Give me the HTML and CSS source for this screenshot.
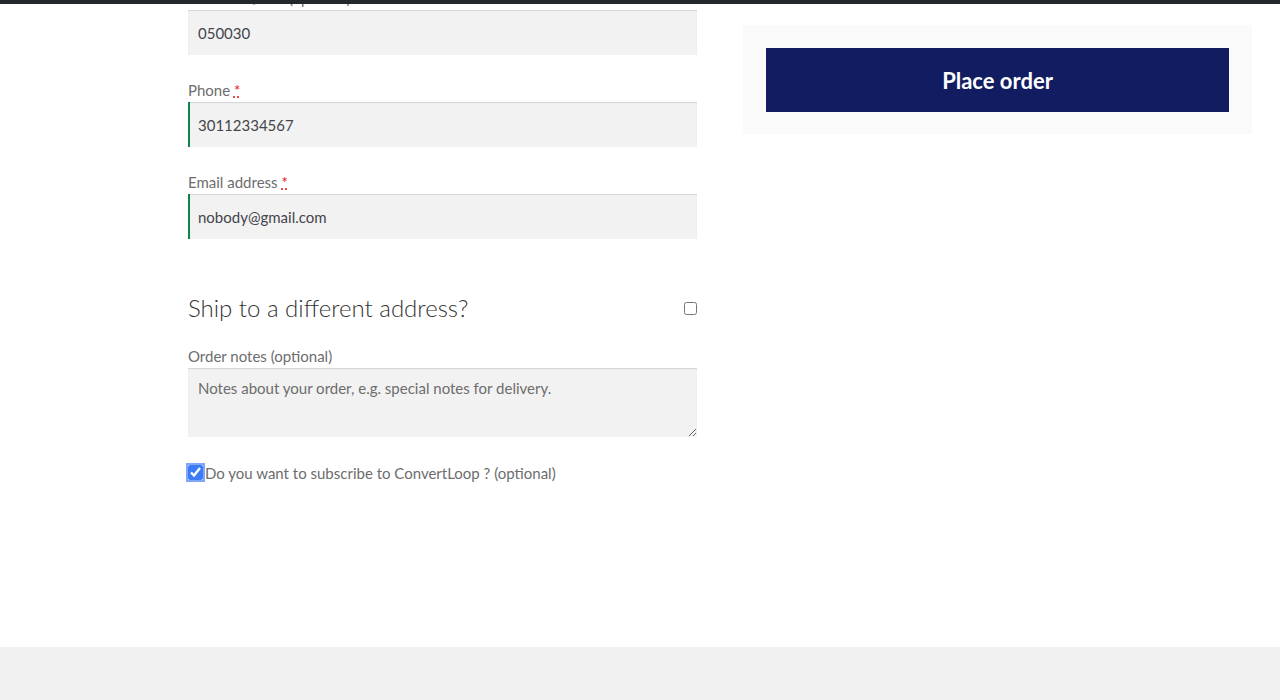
FILE: index.html
```html
<!DOCTYPE html>
<html lang="en">
<head>
<meta charset="utf-8">
<title>Checkout</title>
<link rel="stylesheet" href="styles.css">
</head>
<body>
<div class="topbar"></div>
<main class="page">
  <div class="checkout">
    <div class="col-billing">
      <p class="form-row">
        <label class="lbl">Postcode / ZIP (optional)</label>
        <input class="field" type="text" value="050030">
      </p>
      <p class="form-row">
        <label class="lbl">Phone <abbr class="req" title="required">*</abbr></label>
        <input class="field valid" type="text" value="30112334567">
      </p>
      <p class="form-row">
        <label class="lbl">Email address <abbr class="req" title="required">*</abbr></label>
        <input class="field valid" type="text" value="nobody@gmail.com">
      </p>
      <h3 class="ship">
        <span>Ship to a different address?</span>
        <input class="ship-check" type="checkbox">
      </h3>
      <p class="form-row notes-row">
        <label class="lbl">Order notes (optional)</label>
        <textarea class="field notes" placeholder="Notes about your order, e.g. special notes for delivery."></textarea>
      </p>
      <p class="subscribe">
        <input class="sub-check" type="checkbox" checked>
        <label class="sub-lbl">Do you want to subscribe to ConvertLoop ? (optional)</label>
      </p>
    </div>
    <div class="col-review">
      <div class="payment">
        <button class="place" type="button">Place order</button>
      </div>
    </div>
  </div>
</main>
<footer class="footer"></footer>
</body>
</html>
```
FILE: styles.css
```css
* { box-sizing: border-box; }
html, body { margin: 0; padding: 0; }
body {
  font-family: "Lato", "Open Sans", sans-serif;
  color: #6d6d6d;
  background: #fff;
  font-size: 15px;
  overflow: hidden;
}
.topbar {
  position: fixed;
  top: 0; left: 0; right: 0;
  height: 4px;
  background: #23282d;
  z-index: 10;
}
.page {
  height: 647px;
}
.checkout {
  display: grid;
  grid-template-columns: 509px 509px;
  column-gap: 46px;
  margin-left: 188px;
  width: 1064px;
}
.col-billing {
  margin-top: -14px;
}
.form-row {
  margin: 0 0 23px;
}
.lbl {
  display: block;
  height: 24px;
  line-height: 24px;
  color: #6d6d6d;
}
.req {
  color: #e8100f;
  text-decoration: underline dotted;
  border: 0;
}
.field {
  display: block;
  width: 100%;
  height: 45px;
  border: 0;
  padding: 0 10px;
  margin: 0;
  background: #f2f2f2;
  box-shadow: inset 0 1px 1px rgba(0,0,0,.125);
  font-family: inherit;
  font-size: 15px;
  color: #43454b;
  outline: none;
}
.field.valid {
  border-left: 2px solid #0f834d;
  padding-left: 8px;
}
.ship {
  display: flex;
  justify-content: space-between;
  align-items: center;
  margin: 47px 0 16px;
  height: 42px;
  font-size: 24px;
  font-weight: 300;
  color: #333;
}
.ship-check {
  width: 13px;
  height: 13px;
  margin: 2px 0 0;
}
.notes-row { margin-bottom: 23px; }
.notes {
  height: 69px;
  padding: 10px;
  resize: vertical;
  line-height: 1.4;
}
.notes::placeholder { color: #6d6d6d; }
.subscribe {
  display: flex;
  align-items: center;
  height: 25px;
  margin: 0;
}
.sub-check {
  width: 15px;
  height: 15px;
  margin: 0 2px 0 0;
  accent-color: #3b7cf6;
  outline: 2px solid #7fa7f8;
  outline-offset: 0;
  border-radius: 3px;
}
.sub-lbl { color: #6d6d6d; }
.col-review {
  padding-top: 25px;
}
.payment {
  background: #fafafa;
  padding: 23px;
  height: 109px;
}
.place {
  display: block;
  width: 100%;
  height: 64px;
  border: 0;
  background: #121c60;
  color: #fff;
  font-family: inherit;
  font-size: 22px;
  font-weight: 700;
  cursor: pointer;
}
.footer {
  height: 200px;
  background: #f0f0f0;
}
```
